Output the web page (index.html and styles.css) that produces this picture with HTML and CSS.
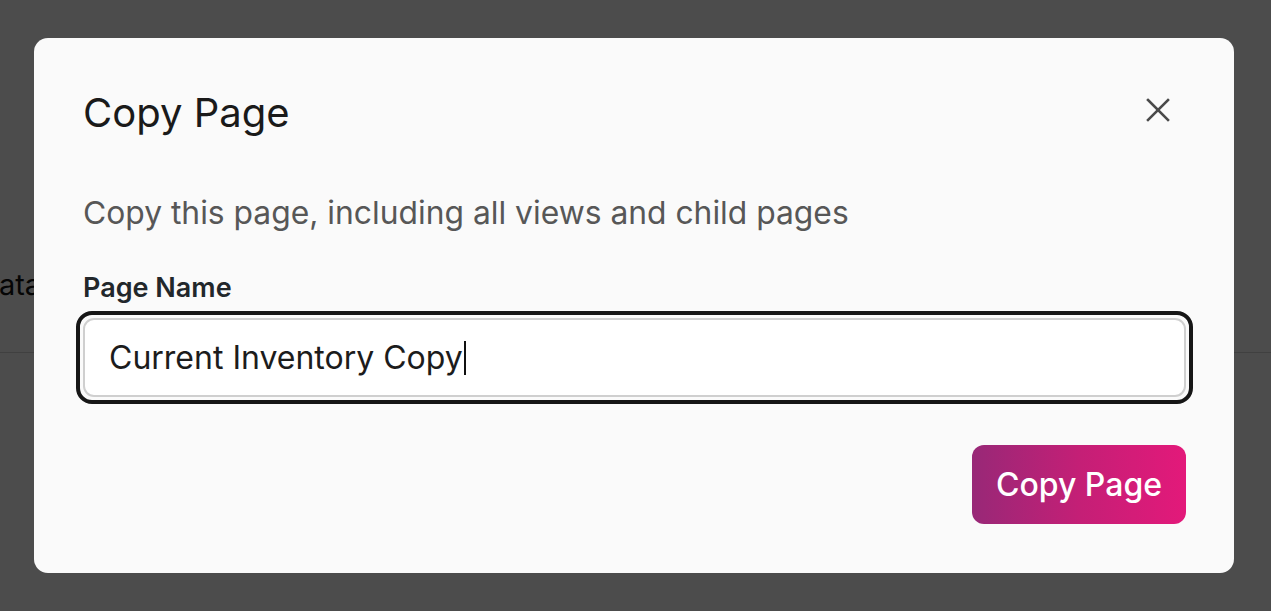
FILE: index.html
```html
<!DOCTYPE html>
<html lang="en">
<head>
    <meta charset="UTF-8">
    <meta name="viewport" content="width=device-width, initial-scale=1.0">
    <title>Copy Page</title>
    <link rel="stylesheet" href="styles.css">
</head>
<body>
    <!-- Page behind the dialog -->
    <div class="page">
        <div class="page-toolbar">
            <span class="page-label">Data</span>
        </div>
    </div>

    <div class="modal-backdrop">
        <div class="modal">
            <div class="modal-header">
                <h2 class="modal-title">Copy Page</h2>
                <button class="modal-close" aria-label="Close">
                    <svg width="26" height="26" viewBox="0 0 26 26" fill="none" stroke="#4a4a4a" stroke-width="2.6" stroke-linecap="square">
                        <line x1="3" y1="3" x2="23" y2="23"/>
                        <line x1="23" y1="3" x2="3" y2="23"/>
                    </svg>
                </button>
            </div>

            <p class="modal-text">Copy this page, including all views and child pages</p>

            <label class="field-label" for="page-name">Page Name</label>
            <div class="field-ring">
                <div class="field-input" id="page-name">Current Inventory Copy<span class="caret"></span></div>
            </div>

            <div class="modal-actions">
                <button class="btn-primary">Copy Page</button>
            </div>
        </div>
    </div>
</body>
</html>
```

FILE: styles.css
```css
* {
    margin: 0;
    padding: 0;
    box-sizing: border-box;
    font-family: 'Inter', 'Noto Sans', sans-serif;
}

body {
    background-color: #fff;
    color: #1d1d1f;
    height: 611px;
    overflow: hidden;
}

/* Background page */
.page {
    height: 100%;
}

.page-toolbar {
    height: 353px;
    border-bottom: 1px solid #d8d8d8;
    display: flex;
    align-items: flex-end;
    padding-bottom: 50px;
}

.page-label {
    font-size: 29px;
    color: #111;
    margin-left: -22px;
}

/* Dialog */
.modal-backdrop {
    position: fixed;
    top: 0;
    left: 0;
    width: 100%;
    height: 100%;
    background-color: rgba(0, 0, 0, 0.7);
    display: flex;
    align-items: center;
    justify-content: center;
}

.modal {
    width: 1200px;
    background-color: #fafafa;
    border-radius: 14px;
    padding: 45px 48px 49px 49px;
    margin-left: -3px;
}

.modal-header {
    display: flex;
    justify-content: space-between;
    align-items: center;
}

.modal-title {
    font-size: 40px;
    font-weight: 400;
    color: #1a1a1a;
    line-height: 60px;
}

.modal-close {
    background: none;
    border: none;
    cursor: pointer;
    display: flex;
    margin-right: 15px;
    margin-top: -6px;
}

.modal-text {
    font-size: 31.8px;
    color: #575757;
    margin-top: 50px;
    line-height: 40px;
}

.field-label {
    display: block;
    font-size: 27px;
    font-weight: 600;
    color: #22272b;
    margin-top: 38px;
    line-height: 34px;
}

.field-ring {
    margin: 6px -7px 0 -7px;
    border: 4px solid #161616;
    border-radius: 16px;
    padding: 3px;
}

.field-input {
    height: 79px;
    background-color: #fff;
    border: 2px solid #cfcfcf;
    border-radius: 11px;
    padding: 0 24px;
    display: flex;
    align-items: center;
    font-size: 32px;
    color: #1c1c1c;
}

.caret {
    display: inline-block;
    width: 2px;
    height: 34px;
    background-color: #111;
    margin-left: 1px;
}

.modal-actions {
    display: flex;
    justify-content: flex-end;
    margin-top: 41px;
}

.btn-primary {
    width: 214px;
    height: 79px;
    border: none;
    border-radius: 12px;
    background: linear-gradient(90deg, #982877 0%, #c41f76 50%, #e3197a 100%);
    color: #fff;
    font-size: 32px;
    font-weight: 500;
    cursor: pointer;
}
```
